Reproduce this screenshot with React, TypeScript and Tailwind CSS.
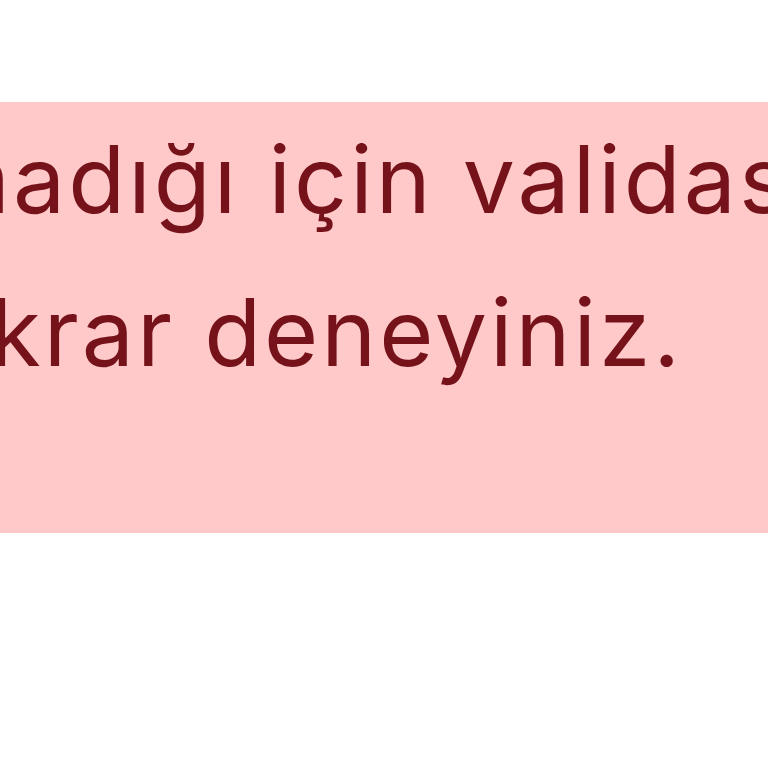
const App = (): JSX.Element => {
  return (
    <div className="w-[768px] h-[768px] bg-white overflow-hidden pt-[102px]">
      <div className="w-full bg-red-200 overflow-hidden pt-px pb-[124px] text-[#76121a] font-['Inter',sans-serif] text-[93px] leading-[153px] tracking-[3px]">
        <div className="whitespace-nowrap ml-[-386px]">
          bulunamadığı için validasyon başarısız oldu. Lütfen
        </div>
        <div className="whitespace-nowrap ml-[-100px]">tekrar deneyiniz.</div>
      </div>
    </div>
  );
};

export default App;
